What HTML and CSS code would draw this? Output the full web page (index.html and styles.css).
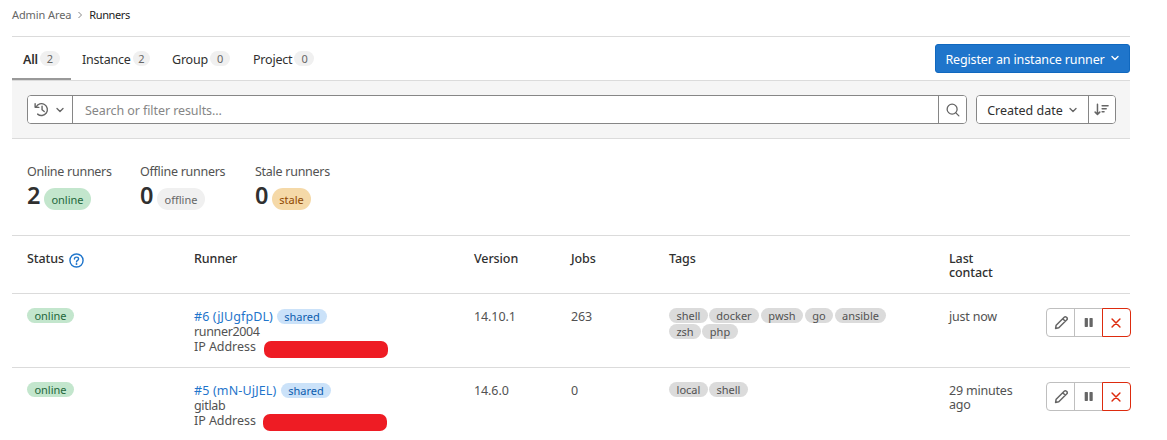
FILE: index.html
```html
<!DOCTYPE html>
<html lang="en">
<head>
<meta charset="utf-8">
<title>Runners</title>
<link rel="stylesheet" href="styles.css">
</head>
<body>
<svg class="sprite" aria-hidden="true">
  <symbol id="chevron-down" viewBox="0 0 16 16"><path d="M4 6l4 4 4-4" fill="none" stroke="currentColor" stroke-width="1.800" stroke-linecap="round" stroke-linejoin="round"/></symbol>
  <symbol id="history" viewBox="0 0 16 16"><path d="M2.300 5.300A6.300 6.300 0 1 1 3.900 12.900M1.200 1.800v3.900h4M8.600 4.600V8.300l2.300 1.900" fill="none" stroke="currentColor" stroke-width="1.500" stroke-linecap="round" stroke-linejoin="round"/></symbol>
  <symbol id="search" viewBox="0 0 16 16"><g fill="none" stroke="currentColor" stroke-width="1.500" stroke-linecap="round"><circle cx="7" cy="7" r="5.700"/><path d="m11 11 3.700 3.700"/></g></symbol>
  <symbol id="sort" viewBox="0 0 16 16"><path d="M3.700 2.500v10.500M1.200 10.800 3.700 13.200l2.500-2.400M8.700 4h6.300M8.700 7.200h4.300M8.700 10.400h2" fill="none" stroke="currentColor" stroke-width="1.600" stroke-linecap="round" stroke-linejoin="round"/></symbol>
  <symbol id="pencil" viewBox="0 0 16 16"><path d="M1.700 14.300 2.300 10.900 10.900 2.300a1.600 1.600 0 0 1 2.300 0l.5.5a1.600 1.600 0 0 1 0 2.300L5.100 13.700ZM9.300 3.900l2.800 2.800" fill="none" stroke="currentColor" stroke-width="1.600" stroke-linejoin="round"/></symbol>
  <symbol id="pause" viewBox="0 0 16 16"><rect x="3.300" y="2.500" width="4" height="11" rx=".8" fill="currentColor"/><rect x="9.200" y="2.500" width="4" height="11" rx=".8" fill="currentColor"/></symbol>
  <symbol id="close" viewBox="0 0 16 16"><path d="m3.500 3.500 9 9M12.500 3.500l-9 9" fill="none" stroke="currentColor" stroke-width="1.700" stroke-linecap="round"/></symbol>
  <symbol id="question" viewBox="0 0 16 16"><g fill="none" stroke="currentColor" stroke-width="1.500"><circle cx="8" cy="8" r="7"/><path d="M5.800 6.400c0-1.200 1-2 2.200-2s2.200.8 2.200 1.900c0 1.500-2.200 1.600-2.200 3.200" stroke-linecap="round"/></g><circle cx="8" cy="11.700" r="1" fill="currentColor"/></symbol>
</svg>

<nav class="breadcrumbs">
  <a>Admin Area</a>
  <svg class="crumb-sep" viewBox="0 0 6 8"><path d="m1.500 1 3 3-3 3" fill="none" stroke="currentColor"/></svg>
  <span class="current">Runners</span>
</nav>

<main>
  <header class="tabs-bar">
    <div class="tab tab-all active"><span>All</span><span class="count">2</span></div>
    <div class="tab tab-instance"><span>Instance</span><span class="count">2</span></div>
    <div class="tab tab-group"><span>Group</span><span class="count">0</span></div>
    <div class="tab"><span>Project</span><span class="count">0</span></div>
    <button class="register"><span>Register an instance runner</span><svg class="chev"><use href="#chevron-down"/></svg></button>
  </header>

  <section class="filters">
    <div class="search">
      <button class="history"><svg class="icon-history"><use href="#history"/></svg><svg class="chev"><use href="#chevron-down"/></svg></button>
      <div class="search-input">Search or filter results...</div>
      <button class="search-go"><svg class="icon"><use href="#search"/></svg></button>
    </div>
    <div class="sorting">
      <button class="sort-by"><span>Created date</span><svg class="chev"><use href="#chevron-down"/></svg></button>
      <button class="sort-dir"><svg class="icon-sort"><use href="#sort"/></svg></button>
    </div>
  </section>

  <section class="stats">
    <div class="stat"><div class="stat-title">Online runners</div><div class="stat-value"><b>2</b><span class="badge large success">online</span></div></div>
    <div class="stat"><div class="stat-title">Offline runners</div><div class="stat-value"><b>0</b><span class="badge large muted">offline</span></div></div>
    <div class="stat"><div class="stat-title">Stale runners</div><div class="stat-value"><b>0</b><span class="badge large warning">stale</span></div></div>
  </section>

  <section class="table">
    <div class="row head">
      <div class="status-head"><span>Status</span><svg class="help"><use href="#question"/></svg></div>
      <div>Runner</div><div>Version</div><div>Jobs</div><div>Tags</div><div class="contact">Last contact</div><div></div>
    </div>
    <div class="row">
      <div><span class="badge success">online</span></div>
      <div class="runner">
        <div class="runner-name"><a class="link-six">#6 (jJUgfpDL)</a><span class="badge info">shared</span></div>
        <div class="runner-host">runner2004</div>
        <div class="address"><span>IP Address</span><i class="redacted"></i></div>
      </div>
      <div class="text">14.10.1</div>
      <div class="text">263</div>
      <div class="tags">
        <span class="badge tag w39">shell</span><span class="badge tag w50">docker</span><span class="badge tag w42 gap">pwsh</span><span class="badge tag w28 gap">go</span><span class="badge tag w51 gap">ansible</span><span class="badge tag w32">zsh</span><span class="badge tag w36">php</span>
      </div>
      <div class="text contact">just now</div>
      <div class="actions">
        <button><svg class="icon-edit"><use href="#pencil"/></svg></button><button><svg class="icon-pause"><use href="#pause"/></svg></button><button class="danger"><svg class="icon"><use href="#close"/></svg></button>
      </div>
    </div>
    <div class="row second">
      <div><span class="badge success">online</span></div>
      <div class="runner">
        <div class="runner-name"><a class="link-five">#5 (mN-UjJEL)</a><span class="badge info">shared</span></div>
        <div class="runner-host">gitlab</div>
        <div class="address"><span>IP Address</span><i class="redacted"></i></div>
      </div>
      <div class="text">14.6.0</div>
      <div class="text">0</div>
      <div class="tags"><span class="badge tag w39">local</span><span class="badge tag w39">shell</span></div>
      <div class="text contact">29 minutes ago</div>
      <div class="actions">
        <button><svg class="icon-edit"><use href="#pencil"/></svg></button><button><svg class="icon-pause"><use href="#pause"/></svg></button><button class="danger"><svg class="icon"><use href="#close"/></svg></button>
      </div>
    </div>
  </section>
</main>
</body>
</html>
```

FILE: styles.css
```css
* { box-sizing: border-box; }
body {
  margin: 0;
  height: 440px;
  overflow: hidden;
  background: #fff;
  color: #525252;
  font: 12.500px/15px "Noto Sans", sans-serif;
}
.sprite { display: none; }
svg { display: block; flex: none; }
button {
  display: flex;
  align-items: center;
  justify-content: center;
  margin: 0;
  padding: 0;
  border: 0;
  background: #fff;
  color: #666;
  font: inherit;
}
main { width: 1118px; margin-left: 12px; }
.chev { width: 12px; height: 12px; }
.icon { width: 14px; height: 14px; }

.breadcrumbs {
  display: flex;
  align-items: center;
  height: 36px;
  padding: 0 0 7px 12px;
  font-size: 11px;
  letter-spacing: -0.100px;
  color: #666;
}
.crumb-sep { width: 6px; height: 8px; margin: 0 6px 0 6px; color: #888; }
.current { color: #222; letter-spacing: -0.400px; }

.tabs-bar {
  display: flex;
  height: 45px;
  border-top: 1px solid #dbdbdb;
  border-bottom: 1px solid #dbdbdb;
  color: #303030;
}
.tab { display: flex; align-items: flex-start; gap: 2px; padding: 15px 11px 0; height: 43px; white-space: nowrap; letter-spacing: -0.200px; }
.tab-all { width: 59px; }
.tab-instance { width: 90px; }
.tab-group { width: 81px; }
.active { font-weight: 600; border-bottom: 2px solid #999; }
.count {
  width: 20px;
  height: 15px;
  margin-top: -1px;
  border-radius: 8px;
  background: #f0f0f0;
  color: #666;
  font-size: 11px;
  font-weight: 400;
  text-align: center;
}
.register {
  width: 195px;
  height: 29px;
  margin: 7px 0 0 auto;
  padding: 1px 0 0 1px;
  gap: 4px;
  border-radius: 3px;
  border: 1px solid #1068bf;
  background: #1f75cb;
  color: #fff;
  letter-spacing: -0.130px;
}

.filters {
  display: flex;
  gap: 9px;
  height: 58px;
  padding: 14px 14px 0 15px;
  border-bottom: 1px solid #dbdbdb;
  background: #f5f5f5;
}
.search, .sorting {
  display: flex;
  height: 29px;
  overflow: hidden;
  border: 1px solid #868686;
  border-radius: 4px;
  background: #fff;
}
.search { width: 940px; }
.history { width: 45px; gap: 5px; padding-right: 1px; border-right: 1px solid #868686; }
.icon-history { width: 15px; height: 15px; }
.search-input { flex: 1; padding: 7px 12px; color: #868686; letter-spacing: -0.080px; }
.search-go { width: 28px; border-left: 1px solid #868686; }
.sorting { width: 140px; }
.sort-by { width: 111px; gap: 4px; padding: 2px 0 0 1px; color: #303030; }
.sort-by .chev { color: #666; }
.sort-by .chev, .register .chev { margin-top: -2px; }
.sort-dir { width: 27px; padding-right: 2px; border-left: 1px solid #868686; }
.icon-sort { width: 15px; height: 15px; }

.stats { display: flex; height: 96px; padding: 25px 15px 0; }
.stat { width: 115px; white-space: nowrap; }
.stat:first-child { width: 113px; }
.stat-title { letter-spacing: -0.270px; }
.stat-value { display: flex; gap: 4px; margin-top: 3px; }
.stat-value b { width: 13px; font-size: 23.500px; font-weight: 600; line-height: 26px; color: #303030; }

.badge {
  display: inline-flex;
  align-items: center;
  justify-content: center;
  width: 47px;
  height: 15px;
  border-radius: 8px;
  font-size: 11px;
  line-height: 15px;
}
.large { height: 22px; margin-top: 6px; border-radius: 11px; padding-top: 1px; }
.success { background: #c3e6cd; color: #24663b; }
.muted { width: 48px; background: #f0f0f0; color: #666; }
.warning { width: 39px; background: #f5d9a8; color: #8f4700; }
.info { width: 50px; background: #cbe2f9; color: #0b5cad; }
.tag { background: #dbdbdb; color: #525252; }

.row {
  display: grid;
  grid-template-columns: 167px 280px 97px 98px 280px 97px 85px;
  width: 1118px;
  height: 74px;
  padding: 14px 0 0 15px;
  border-top: 1px solid #dbdbdb;
}
.row > div { min-width: 0; }
.head { height: 58px; padding-top: 16px; color: #303030; font-weight: 500; line-height: 14px; letter-spacing: -0.100px; }
.row > .contact { width: 67px; line-height: 14px; }
.row > .text.contact { padding-top: 2px; letter-spacing: -0.200px; }
.status-head { display: flex; gap: 5px; }
.help { width: 15px; height: 15px; margin-top: 1px; color: #1f75cb; }
.text { padding-top: 1px; letter-spacing: -0.100px; }
.runner { padding-top: 1px; }
.runner-name { display: flex; }
.runner-name a { color: #1f75cb; white-space: nowrap; letter-spacing: 0.100px; }
.runner-host { letter-spacing: -0.350px; }
.link-six { width: 83px; }
.runner-name .link-five { width: 87px; letter-spacing: 0.150px; }
.address { display: flex; }
.address span { width: 70px; letter-spacing: -0.050px; }
.redacted { width: 124px; height: 17px; margin-top: 2px; border-radius: 7px; background: #ee1c24; }
.second .redacted { margin-left: -1px; margin-top: 1px; }
.tags { display: flex; flex-wrap: wrap; align-content: flex-start; gap: 1px; width: 225px; }
.gap { margin-left: 1px; }
.w28 { width: 28px; } .w32 { width: 32px; } .w36 { width: 36px; } .w39 { width: 39px; }
.w42 { width: 42px; } .w50 { width: 50px; } .w51 { width: 51px; }
.actions { display: flex; height: 29px; }
.actions button { width: 29px; border: 1px solid #bfbfbf; border-radius: 4px 0 0 4px; }
.actions button + button { margin-left: -1px; border-radius: 0; }
.actions button.danger { border: 1px solid #dd2b0e; border-radius: 0 4px 4px 0; color: #dd2b0e; padding-right: 1px; }
.icon-edit { width: 15px; height: 15px; margin-left: 1px; }
.icon-pause { width: 13px; height: 13px; }
```
